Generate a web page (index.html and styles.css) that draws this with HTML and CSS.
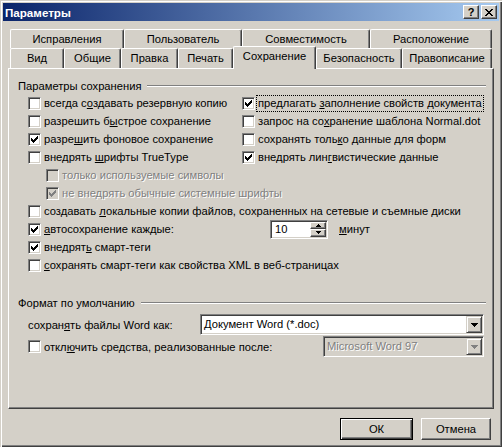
FILE: index.html
```html
<!DOCTYPE html>
<html lang="ru">
<head>
<meta charset="utf-8">
<title>Параметры</title>
<link rel="stylesheet" href="styles.css">
</head>
<body>
<div class="window">
  <div class="titlebar">
    <span class="title">Параметры</span>
    <div class="caption-btns">
      <span class="cap-btn help">?</span>
      <span class="cap-btn close"><svg width="8" height="7" viewBox="0 0 8 7"><path d="M0 0h2v1H0zM6 0h2v1H6zM1 1h2v1H1zM5 1h2v1H5zM2 2h4v1H2zM3 3h2v1H3zM2 4h4v1H2zM1 5h2v1H1zM5 5h2v1H5zM0 6h2v1H0zM6 6h2v1H6z"/></svg></span>
    </div>
  </div>

  <div class="tabs">
    <div class="tab-row back">
      <div class="tab t-ispr">Исправления</div>
      <div class="tab t-user">Пользователь</div>
      <div class="tab t-compat">Совместимость</div>
      <div class="tab t-loc">Расположение</div>
    </div>
    <div class="tab-row front">
      <div class="tab t-view">Вид</div>
      <div class="tab t-gen">Общие</div>
      <div class="tab t-edit">Правка</div>
      <div class="tab t-print">Печать</div>
      <div class="tab t-save selected">Сохранение</div>
      <div class="tab t-sec">Безопасность</div>
      <div class="tab t-spell">Правописание</div>
    </div>
  </div>

  <div class="panel">
    <div class="group-title"><span>Параметры сохранения</span><span class="etch"></span></div>

    <div class="two-col">
      <div class="col">
        <div class="cb"><span class="box"></span><span class="txt">всегда с<u>о</u>здавать резервную копию</span></div>
        <div class="cb"><span class="box"></span><span class="txt">разрешить б<u>ы</u>строе сохранение</span></div>
        <div class="cb"><span class="box"><svg class="check" width="9" height="9" viewBox="0 0 9 9"><path d="M1 3h1v3H1zM2 4h1v3H2zM3 5h1v3H3zM4 4h1v3H4zM5 3h1v3H5zM6 2h1v3H6zM7 1h1v3H7z"/></svg></span><span class="txt">разре<u>ш</u>ить фоновое сохранение</span></div>
        <div class="cb"><span class="box"></span><span class="txt">внедрять <u>ш</u>рифты TrueType</span></div>
        <div class="cb indent disabled"><span class="box"></span><span class="txt">только используемые символы</span></div>
        <div class="cb indent disabled"><span class="box"><svg class="check" width="9" height="9" viewBox="0 0 9 9"><path d="M1 3h1v3H1zM2 4h1v3H2zM3 5h1v3H3zM4 4h1v3H4zM5 3h1v3H5zM6 2h1v3H6zM7 1h1v3H7z"/></svg></span><span class="txt">не внедрять обычные системные шрифты</span></div>
      </div>
      <div class="col">
        <div class="cb"><span class="box"><svg class="check" width="9" height="9" viewBox="0 0 9 9"><path d="M1 3h1v3H1zM2 4h1v3H2zM3 5h1v3H3zM4 4h1v3H4zM5 3h1v3H5zM6 2h1v3H6zM7 1h1v3H7z"/></svg></span><span class="txt focus">предлагать <u>з</u>аполнение свойств документа</span></div>
        <div class="cb"><span class="box"></span><span class="txt">запрос на со<u>х</u>ранение шаблона Normal.dot</span></div>
        <div class="cb"><span class="box"></span><span class="txt">сохранять толь<u>к</u>о данные для форм</span></div>
        <div class="cb"><span class="box"><svg class="check" width="9" height="9" viewBox="0 0 9 9"><path d="M1 3h1v3H1zM2 4h1v3H2zM3 5h1v3H3zM4 4h1v3H4zM5 3h1v3H5zM6 2h1v3H6zM7 1h1v3H7z"/></svg></span><span class="txt">внедрять лин<u>г</u>вистические данные</span></div>
      </div>
    </div>

    <div class="cb"><span class="box"></span><span class="txt">создавать <u>л</u>окальные копии файлов, сохраненных на сетевые и съемные диски</span></div>
    <div class="cb-row">
      <div class="cb fixed-autosave"><span class="box"><svg class="check" width="9" height="9" viewBox="0 0 9 9"><path d="M1 3h1v3H1zM2 4h1v3H2zM3 5h1v3H3zM4 4h1v3H4zM5 3h1v3H5zM6 2h1v3H6zM7 1h1v3H7z"/></svg></span><span class="txt"><u>а</u>втосохранение каждые:</span></div>
      <div class="spin">
        <span class="spin-val">10</span>
        <span class="spin-btns">
          <span class="spin-btn"><svg width="5" height="3" viewBox="0 0 5 3"><path d="M2 0h1v1H2zM1 1h3v1H1zM0 2h5v1H0z"/></svg></span>
          <span class="spin-btn"><svg width="5" height="3" viewBox="0 0 5 3"><path d="M0 0h5v1H0zM1 1h3v1H1zM2 2h1v1H2z"/></svg></span>
        </span>
      </div>
      <span class="units"><u>м</u>инут</span>
    </div>
    <div class="cb"><span class="box"><svg class="check" width="9" height="9" viewBox="0 0 9 9"><path d="M1 3h1v3H1zM2 4h1v3H2zM3 5h1v3H3zM4 4h1v3H4zM5 3h1v3H5zM6 2h1v3H6zM7 1h1v3H7z"/></svg></span><span class="txt">внедрят<u>ь</u> смарт-теги</span></div>
    <div class="cb"><span class="box"></span><span class="txt"><u>с</u>охранять смарт-теги как свойства XML в веб-страницах</span></div>

    <div class="group-title second"><span>Формат по умолчанию</span><span class="etch"></span></div>

    <div class="combo-row first">
      <span class="combo-label">сохран<u>я</u>ть файлы Word как:</span>
      <div class="combo wide">
        <span class="combo-val">Документ Word (*.doc)</span>
        <span class="combo-btn"><svg width="7" height="4" viewBox="0 0 7 4"><path d="M0 0h7v1H0zM1 1h5v1H1zM2 2h3v1H2zM3 3h1v1H3z"/></svg></span>
      </div>
    </div>
    <div class="combo-row">
      <div class="cb fixed-disable"><span class="box"></span><span class="txt">откл<u>ю</u>чить средства, реализованные после:</span></div>
      <div class="combo narrow disabled">
        <span class="combo-val">Microsoft Word 97</span>
        <span class="combo-btn"><svg width="7" height="4" viewBox="0 0 7 4"><path d="M0 0h7v1H0zM1 1h5v1H1zM2 2h3v1H2zM3 3h1v1H3z"/></svg></span>
      </div>
    </div>
  </div>

  <div class="buttons">
    <span class="btn default">ОК</span>
    <span class="btn cancel">Отмена</span>
  </div>
</div>
</body>
</html>
```

FILE: styles.css
```css
html, body {
  margin: 0;
  padding: 0;
  background: #d4d0c8;
}
body {
  font-family: "Liberation Sans", Arial, sans-serif;
  font-size: 11.2px;
  color: #000;
}
.window {
  box-sizing: border-box;
  width: 502px;
  height: 447px;
  background: #d4d0c8;
  display: flex;
  flex-direction: column;
  box-shadow: inset 1px 1px #d4d0c8, inset 2px 2px #fff, inset -1px -1px #404040, inset -2px -2px #808080;
}
.titlebar {
  margin: 3px 3px 0;
  height: 18px;
  display: flex;
  align-items: center;
  padding: 0 2px;
  background: linear-gradient(to right, #0a246a, #a6caf0);
}
.title {
  color: #fff;
  font-weight: bold;
  font-size: 11.6px;
}
.caption-btns {
  margin-left: auto;
  display: flex;
  gap: 2px;
}
.cap-btn {
  box-sizing: border-box;
  width: 16px;
  height: 14px;
  background: #d4d0c8;
  border: 1px solid;
  border-color: #fff #404040 #404040 #fff;
  box-shadow: inset -1px -1px #808080;
  display: flex;
  align-items: center;
  justify-content: center;
  font-weight: bold;
  font-size: 11px;
  line-height: 12px;
}
.cap-btn svg { shape-rendering: crispEdges; }

.tabs {
  margin: 8px 0 0 10px;
}
.tab-row {
  display: flex;
  align-items: flex-start;
}
.tab-row.back { height: 19px; }
.tab-row.front { height: 20px; }
.tab {
  box-sizing: border-box;
  height: 100%;
  background: #d4d0c8;
  border-top: 1px solid #fff;
  border-left: 1px solid #fff;
  border-right: 1px solid #404040;
  box-shadow: inset -1px 0 #808080;
  border-radius: 2px 2px 0 0;
  text-align: center;
  line-height: 18px;
  white-space: nowrap;
}
.tab.selected {
  position: relative;
  z-index: 1;
  height: 23px;
  margin-top: -2px;
}
.t-ispr { width: 114px; }
.t-user { width: 118px; }
.t-compat { width: 128px; }
.t-loc { width: 122px; }
.t-view { width: 54px; }
.t-gen { width: 57px; }
.t-edit { width: 57px; }
.t-print { width: 55px; }
.t-save { width: 83px; }
.t-sec { width: 86px; }
.t-spell { width: 90px; }

.panel {
  box-sizing: border-box;
  width: 486px;
  height: 341px;
  margin-left: 8px;
  border: 1px solid;
  border-color: #fff #404040 #404040 #fff;
  box-shadow: inset -1px -1px #808080;
  padding: 10px 7px 0 19px;
}
.group-title {
  display: flex;
  align-items: center;
  height: 14px;
  margin: 0 0 1px -10px;
  gap: 6px;
  white-space: nowrap;
}
.group-title.second { margin-top: 22px; margin-bottom: 4px; }
.etch {
  flex: 1;
  height: 0;
  border-top: 1px solid #808080;
  border-bottom: 1px solid #fff;
}
.two-col {
  display: grid;
  grid-template-columns: 214px 1fr;
}
.cb {
  display: flex;
  align-items: center;
  height: 18px;
  gap: 3px;
  white-space: nowrap;
}
.cb.indent { margin-left: 18px; }
.box {
  box-sizing: border-box;
  flex: none;
  width: 13px;
  height: 13px;
  background: #fff;
  border: 1px solid;
  border-color: #808080 #fff #fff #808080;
  box-shadow: inset 1px 1px #404040, inset -1px -1px #d4d0c8;
  display: flex;
  align-items: center;
  justify-content: center;
}
.check { shape-rendering: crispEdges; fill: #000; }
.disabled .box { background: #d4d0c8; }
.disabled .check { fill: #808080; }
.disabled .txt, .combo.disabled .combo-val {
  color: #808080;
  text-shadow: 1px 1px #fff;
}
.txt.focus {
  outline: 1px dotted #000;
  outline-offset: 0;
  padding: 0 1px;
  margin-left: -1px;
  line-height: 15px;
}
.cb-row {
  display: flex;
  align-items: center;
  height: 18px;
}
.fixed-autosave { width: 242px; flex: none; }
.spin {
  box-sizing: border-box;
  width: 58px;
  height: 19px;
  display: flex;
  background: #fff;
  border: 1px solid;
  border-color: #808080 #fff #fff #808080;
  box-shadow: inset 1px 1px #404040, inset -1px -1px #d4d0c8;
  padding: 1px 1px 1px 1px;
}
.spin-val {
  flex: 1;
  padding-left: 3px;
  line-height: 15px;
}
.spin-btns {
  display: flex;
  flex-direction: column;
  width: 16px;
}
.spin-btn {
  box-sizing: border-box;
  flex: 1;
  background: #d4d0c8;
  border: 1px solid;
  border-color: #fff #404040 #404040 #fff;
  box-shadow: inset -1px -1px #808080;
  display: flex;
  align-items: center;
  justify-content: center;
}
.spin-btn svg, .combo-btn svg { shape-rendering: crispEdges; }
.units { margin-left: 11px; }

.combo-row {
  display: flex;
  align-items: center;
  height: 21px;
  margin-top: 1px;
}
.combo-row.first { margin-top: 0; }
.combo-label { width: 172px; flex: none; white-space: nowrap; }
.fixed-disable { width: 295px; flex: none; }
.combo {
  box-sizing: border-box;
  height: 21px;
  display: flex;
  align-items: stretch;
  background: #fff;
  border: 1px solid;
  border-color: #808080 #fff #fff #808080;
  box-shadow: inset 1px 1px #404040, inset -1px -1px #d4d0c8;
  padding: 1px;
}
.combo.wide { width: 284px; }
.combo.narrow { width: 161px; }
.combo.disabled { background: #d4d0c8; }
.combo-val {
  flex: 1;
  padding-left: 2px;
  line-height: 17px;
  white-space: nowrap;
}
.combo-btn {
  box-sizing: border-box;
  width: 16px;
  background: #d4d0c8;
  border: 1px solid;
  border-color: #d4d0c8 #404040 #404040 #d4d0c8;
  box-shadow: inset 1px 1px #fff, inset -1px -1px #808080;
  display: flex;
  align-items: center;
  justify-content: center;
}
.combo.disabled .combo-btn svg { fill: #808080; }

.buttons {
  display: flex;
  justify-content: flex-end;
  gap: 8px;
  margin-top: 9px;
  padding-right: 11px;
}
.btn {
  box-sizing: border-box;
  height: 22px;
  display: flex;
  align-items: center;
  justify-content: center;
  background: #d4d0c8;
}
.btn.default {
  width: 73px;
  border: 1px solid #000;
  box-shadow: inset 1px 1px #fff, inset -1px -1px #404040, inset -2px -2px #808080;
}
.btn.cancel {
  width: 70px;
  border: 1px solid;
  border-color: #fff #404040 #404040 #fff;
  box-shadow: inset -1px -1px #808080;
}
```
